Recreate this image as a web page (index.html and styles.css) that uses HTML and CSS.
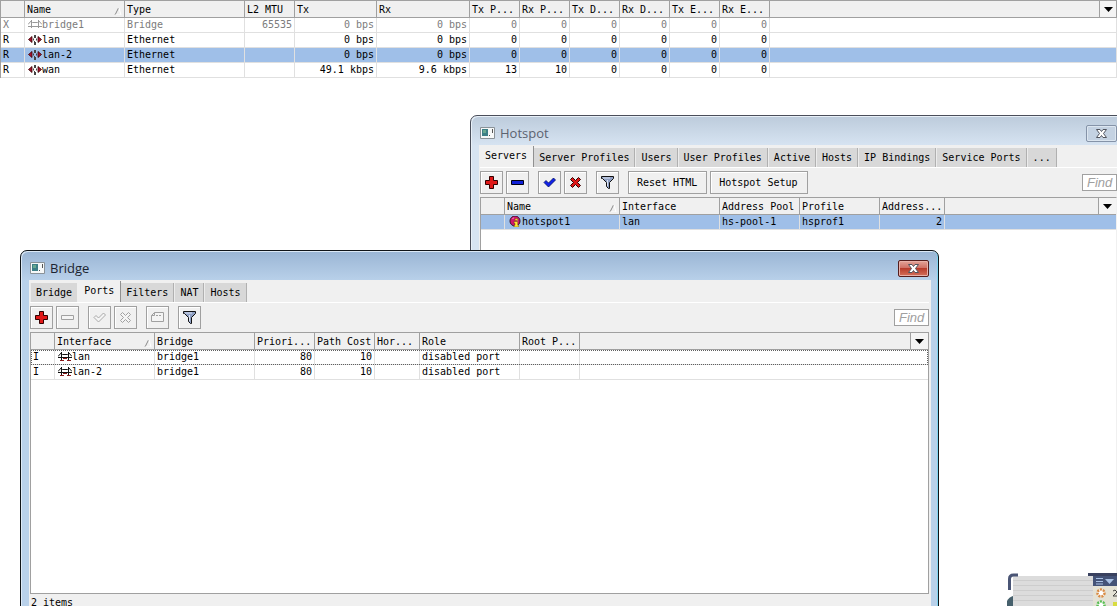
FILE: index.html
```html
<!DOCTYPE html>
<html lang="en">
<head>
<meta charset="utf-8">
<title>Interfaces</title>
<link rel="stylesheet" href="styles.css">
</head>
<body>
<svg class="defs" aria-hidden="true">
  <symbol id="plus" viewBox="0 0 13 13"><path d="M4.500 .5h4v4h4v4h-4v4h-4v-4h-4v-4h4z" fill="#e01818" stroke="#300"/></symbol>
  <symbol id="minus" viewBox="0 0 13 13"><path d="M.5 4.500h12v4h-12z" fill="#1020d8" stroke="#001"/></symbol>
  <symbol id="minus-off" viewBox="0 0 13 13"><path d="M.5 4.500h12v4h-12z" fill="#f4f4f4" stroke="#a0a0a0"/></symbol>
  <symbol id="check" viewBox="0 0 13 13"><path d="M1 6.500l2-2 2.500 2.500 5-5 2 2-7 7z" fill="#1020e8" stroke="#001060" stroke-width=".8"/></symbol>
  <symbol id="check-off" viewBox="0 0 13 13"><path d="M1 6.500l2-2 2.500 2.500 5-5 2 2-7 7z" fill="#f4f4f4" stroke="#a0a0a0" stroke-width=".9"/></symbol>
  <symbol id="cross" viewBox="0 0 13 13"><path d="M1.500 3.500l2-2 3 3 3-3 2 2-3 3 3 3-2 2-3-3-3 3-2-2 3-3z" fill="#e01818" stroke="#300"/></symbol>
  <symbol id="cross-off" viewBox="0 0 13 13"><path d="M1.500 3.500l2-2 3 3 3-3 2 2-3 3 3 3-2 2-3-3-3 3-2-2 3-3z" fill="#f4f4f4" stroke="#a0a0a0"/></symbol>
  <symbol id="note-off" viewBox="0 0 13 13"><path d="M3.500 1.500h9v9h-12v-6zM.5 4.500h3v-3M5 4.500h2M8 4.500h2" fill="#f4f4f4" stroke="#a0a0a0"/></symbol>
  <symbol id="funnel" viewBox="0 0 13 13"><path d="M.5 .5h12v2l-4 4v6h-1l-2-2v-4l-4-4h-1z" fill="#8fa0c4" stroke="#111"/><path d="M2 2h7M6.500 4v6" stroke="#dce4f4"/></symbol>
  <symbol id="ether" viewBox="0 0 14 11"><path d="M.5 5.500L4 2.500v6zM13.500 5.500L10 2.500v6z" fill="#b01030" stroke="#300" stroke-width=".8"/><path d="M5.500 4.500v2M6.500 1v3M6.500 7v4M8.500 4.500v2M7.500 1v3M7.500 8v3" stroke="#444" fill="none"/></symbol>
  <symbol id="bridge" viewBox="0 0 14 11"><path d="M0 5.500L3.500 1.500M3.500 1v8M10.500 1v8M3.500 2.500l1 1h5l1-1M0 6.500h14M10.500 1.500l3.500 4" stroke="#111" fill="none"/><path d="M2 9.500h4M9 9.500h4M5 7.500h4" stroke="#8a1818"/></symbol>
  <symbol id="bridge-off" viewBox="0 0 14 11"><path d="M0 5.500L3.500 1.500M3.500 1v8M10.500 1v8M3.500 2.500l1 1h5l1-1M0 7.500h14M10.500 1.500l3.500 4" stroke="#999" fill="none"/></symbol>
  <symbol id="sort" viewBox="0 0 8 8"><path d="M1 8L4.500 1" stroke="#888"/><path d="M5 1l2 7H1" stroke="#fff" fill="none"/></symbol>
  <symbol id="down" viewBox="0 0 9 5"><path d="M0 0h9L4.500 5z" fill="#000"/></symbol>
  <symbol id="app" viewBox="0 0 15 12"><path d="M.5 .5h14v11H.5z" fill="#f6f8f8" stroke="#8a9298"/><path d="M2 2h6v7H2z" fill="#3d7f86"/><path d="M3 3h3v3H3z" fill="#68a890"/><path d="M9 8h1v1H9zM12 2h1v4h-1z" fill="#555"/></symbol>
  <symbol id="close" viewBox="0 0 13 11"><path d="M1.500 1.500h3.500l1.500 2 1.500-2h3.500L8.500 5.500l3 4H8l-1.500-2-1.500 2H1.500l3-4z" fill="#fff" stroke="#50545e"/></symbol>
</svg>

<main class="desktop">
  <section class="list interfaces">
    <table class="grid">
      <colgroup><col class="w24"><col class="w100"><col class="w120"><col class="w50"><col class="w82"><col class="w93"><col class="w50"><col class="w50"><col class="w50"><col class="w50"><col class="w50"><col class="w50"><col><col class="w17"></colgroup>
      <thead><tr><th></th><th>Name<svg class="sort"><use href="#sort"/></svg></th><th>Type</th><th>L2 MTU</th><th>Tx</th><th>Rx</th><th>Tx P...</th><th>Rx P...</th><th>Tx D...</th><th>Rx D...</th><th>Tx E...</th><th>Rx E...</th><th></th><th><button class="pick" aria-label="Columns"><svg><use href="#down"/></svg></button></th></tr></thead>
      <tbody>
        <tr class="off"><td>X</td><td class="named"><svg><use href="#bridge-off"/></svg>bridge1</td><td>Bridge</td><td class="num">65535</td><td class="num">0 bps</td><td class="num">0 bps</td><td class="num">0</td><td class="num">0</td><td class="num">0</td><td class="num">0</td><td class="num">0</td><td class="num">0</td><td colspan="2"></td></tr>
        <tr><td>R</td><td class="named"><svg><use href="#ether"/></svg>lan</td><td>Ethernet</td><td></td><td class="num">0 bps</td><td class="num">0 bps</td><td class="num">0</td><td class="num">0</td><td class="num">0</td><td class="num">0</td><td class="num">0</td><td class="num">0</td><td colspan="2"></td></tr>
        <tr class="selected"><td>R</td><td class="named"><svg><use href="#ether"/></svg>lan-2</td><td>Ethernet</td><td></td><td class="num">0 bps</td><td class="num">0 bps</td><td class="num">0</td><td class="num">0</td><td class="num">0</td><td class="num">0</td><td class="num">0</td><td class="num">0</td><td colspan="2"></td></tr>
        <tr><td>R</td><td class="named"><svg><use href="#ether"/></svg>wan</td><td>Ethernet</td><td></td><td class="num">49.1 kbps</td><td class="num">9.6 kbps</td><td class="num">13</td><td class="num">10</td><td class="num">0</td><td class="num">0</td><td class="num">0</td><td class="num">0</td><td colspan="2"></td></tr>
      </tbody>
    </table>
  </section>

  <section class="window hotspot">
    <header class="titlebar"><svg class="app"><use href="#app"/></svg><h2>Hotspot</h2><button class="close" aria-label="Close"><svg><use href="#close"/></svg></button></header>
    <div class="client">
      <nav class="tabs"><button class="tab active">Servers</button><button class="tab">Server Profiles</button><button class="tab">Users</button><button class="tab">User Profiles</button><button class="tab">Active</button><button class="tab">Hosts</button><button class="tab">IP Bindings</button><button class="tab">Service Ports</button><button class="tab">...</button></nav>
      <div class="toolbar">
        <div class="group"><button class="tool" aria-label="Add"><svg><use href="#plus"/></svg></button><button class="tool" aria-label="Remove"><svg><use href="#minus"/></svg></button></div>
        <div class="group"><button class="tool" aria-label="Enable"><svg><use href="#check"/></svg></button><button class="tool" aria-label="Disable"><svg><use href="#cross"/></svg></button></div>
        <div class="group"><button class="tool" aria-label="Filter"><svg><use href="#funnel"/></svg></button></div>
        <div class="group"><button class="tool text">Reset HTML</button><button class="tool text">Hotspot Setup</button></div>
        <input class="find" type="text" placeholder="Find" aria-label="Find">
      </div>
      <div class="list">
        <table class="grid">
          <colgroup><col class="w24"><col class="w115"><col class="w100"><col class="w80"><col class="w80"><col class="w65"><col><col class="w17"></colgroup>
          <thead><tr><th></th><th>Name<svg class="sort"><use href="#sort"/></svg></th><th>Interface</th><th>Address Pool</th><th>Profile</th><th>Address...</th><th></th><th><button class="pick" aria-label="Columns"><svg><use href="#down"/></svg></button></th></tr></thead>
          <tbody><tr class="selected"><td></td><td class="named"><svg viewBox="0 0 14 12"><circle cx="7" cy="5.500" r="5.500" fill="#d0186c" stroke="#301020"/><path d="M4 3l2-1M9 3l1 3" stroke="#ff90c0"/><path d="M6 6h4v4h1v2H6v-2h1V8H6zM7 3h3v2H7z" fill="#ffe630" stroke="#403000" stroke-width=".4"/></svg>hotspot1</td><td>lan</td><td>hs-pool-1</td><td>hsprof1</td><td class="num">2</td><td colspan="2"></td></tr></tbody>
        </table>
      </div>
    </div>
  </section>

  <section class="window bridge">
    <header class="titlebar"><svg class="app"><use href="#app"/></svg><h2>Bridge</h2><button class="close" aria-label="Close"><svg><use href="#close"/></svg></button></header>
    <div class="client">
      <nav class="tabs"><button class="tab">Bridge</button><button class="tab active">Ports</button><button class="tab">Filters</button><button class="tab">NAT</button><button class="tab">Hosts</button></nav>
      <div class="toolbar">
        <div class="group"><button class="tool" aria-label="Add"><svg><use href="#plus"/></svg></button><button class="tool" disabled aria-label="Remove"><svg><use href="#minus-off"/></svg></button></div>
        <div class="group"><button class="tool" disabled aria-label="Enable"><svg><use href="#check-off"/></svg></button><button class="tool" disabled aria-label="Disable"><svg><use href="#cross-off"/></svg></button></div>
        <div class="group"><button class="tool" disabled aria-label="Comment"><svg><use href="#note-off"/></svg></button></div>
        <div class="group"><button class="tool" aria-label="Filter"><svg><use href="#funnel"/></svg></button></div>
        <input class="find" type="text" placeholder="Find" aria-label="Find">
      </div>
      <div class="list">
        <table class="grid">
          <colgroup><col class="w24"><col class="w100"><col class="w100"><col class="w60"><col class="w60"><col class="w45"><col class="w100"><col class="w60"><col><col class="w17"></colgroup>
          <thead><tr><th></th><th>Interface<svg class="sort"><use href="#sort"/></svg></th><th>Bridge</th><th>Priori...</th><th>Path Cost</th><th>Hor...</th><th>Role</th><th>Root P...</th><th></th><th><button class="pick" aria-label="Columns"><svg><use href="#down"/></svg></button></th></tr></thead>
          <tbody>
            <tr class="focused"><td>I</td><td class="named"><svg><use href="#bridge"/></svg>lan</td><td>bridge1</td><td class="num">80</td><td class="num">10</td><td></td><td>disabled port</td><td></td><td colspan="2"></td></tr>
            <tr><td>I</td><td class="named"><svg><use href="#bridge"/></svg>lan-2</td><td>bridge1</td><td class="num">80</td><td class="num">10</td><td></td><td>disabled port</td><td></td><td colspan="2"></td></tr>
          </tbody>
        </table>
      </div>
      <footer class="status">2 items</footer>
    </div>
  </section>

  <svg class="gadget" viewBox="0 0 110 34" aria-hidden="true">
    <path d="M6 4h80v30H6z" fill="#dcdcdc"/>
    <path d="M6 8.500h80M6 13.500h80M6 18.500h80M6 23.500h80M6 28.500h80" stroke="#cdcdcd"/>
    <path d="M2.500 18V7q0-4 4-4H11" fill="none" stroke="#4a5575" stroke-width="3"/>
    <path d="M0 34v-5q2-4 6-5v10z" fill="#46606c"/>
    <path d="M81 1h29v3H81z" fill="#39415f"/><path d="M86 4h24v10H86z" fill="#445378"/>
    <path d="M89 6.500h7M89 9.500h7M89 12h7" stroke="#a9c1e4"/><path d="M98 7h9l-4.500 5z" fill="#a9c1e4"/>
    <path d="M86 14h24v20H86z" fill="#e4e2d6"/>
    <circle cx="94" cy="21" r="3.500" fill="#fff" stroke="#d98c45" stroke-width="2.500" stroke-dasharray="2 1"/>
    <circle cx="94" cy="33" r="3.500" fill="#fff" stroke="#5abf54" stroke-width="2.500" stroke-dasharray="2 1"/>
    <path d="M106 19l2-1 2 2-4 4h4" fill="none" stroke="#444"/><path d="M106 30h4v4h-4z" fill="#d8dc40"/>
  </svg>
</main>
</body>
</html>
```
FILE: styles.css
```css
* { box-sizing: border-box; }
body {
  margin: 0;
  background: #fff;
  color: #000;
  font: 10px/14px "DejaVu Sans Mono", "Liberation Mono", monospace;
}
button, input { margin: 0; padding: 0; border: 0; font: inherit; color: inherit; }
.defs { display: none; }
.desktop { position: relative; height: 100vh; overflow: hidden; }

/* Lists */
.list { border-top: 1px solid #a0a0a0; border-left: 1px solid #a0a0a0; background: #fff; }
.grid { width: 100%; table-layout: fixed; border-collapse: separate; border-spacing: 0; }
.grid th, .grid td { padding: 0 2px; white-space: nowrap; overflow: hidden; text-align: left; font-weight: normal; }
.grid th { height: 17px; padding-top: 1px; background: #f0f0f0; border-right: 1px solid #a0a0a0; border-bottom: 1px solid #a0a0a0; }
.grid td { height: 15px; border-right: 1px solid #e0e0e0; border-bottom: 1px solid #e0e0e0; }
.grid th:last-child { padding: 0; }
.grid td.num { text-align: right; }
.grid td.named { padding-left: 3px; }
.named svg { width: 14px; height: 11px; vertical-align: -2px; }
.off { color: #7c7c7c; }
.selected { background: #9fbfe8; }
.focused { outline: 1px dotted #606060; outline-offset: -1px; }
.sort { float: right; width: 8px; height: 8px; margin-top: 4px; }
.pick { display: flex; width: 100%; height: 16px; align-items: center; justify-content: center; background: #f4f4f4; }
.pick svg { width: 9px; height: 5px; }
.w17 { width: 17px; }
.w24 { width: 24px; }
.w45 { width: 45px; }
.w50 { width: 50px; }
.w60 { width: 60px; }
.w65 { width: 65px; }
.w80 { width: 80px; }
.w82 { width: 82px; }
.w93 { width: 93px; }
.w100 { width: 100px; }
.w115 { width: 115px; }
.w120 { width: 120px; }

/* Windows */
.window {
  position: absolute;
  display: flex;
  flex-direction: column;
  padding: 0 7px 0 8px;
  border: 1px solid #101418;
  border-radius: 7px 7px 0 0;
}
.hotspot {
  top: 115px; left: 470px; right: -8px; bottom: -20px;
  border-color: #4a4e5a;
  background: linear-gradient(#bccbdb, #d7e4f2 30px);
  box-shadow: inset 1px 1px #e8f0f8;
}
.bridge {
  top: 250px; left: 20px; right: 178px; bottom: -8px;
  background: linear-gradient(#9ab5d4, #b9d1ea 30px);
  box-shadow: inset 1px 1px #dce9f6, inset -1px 0 #7fd4f0;
}
.titlebar { display: flex; align-items: center; height: 29px; padding: 6px 2px 0 1px; gap: 5px; }
.titlebar h2 { flex: 1; margin: 0; padding-bottom: 2px; font: 13px/18px "Open Sans", "Noto Sans", sans-serif; color: #1c2430; }
.hotspot h2 { color: #5c6370; }
.app { width: 15px; height: 12px; margin-bottom: 2px; }
.close {
  display: flex; align-items: center; justify-content: center;
  width: 31px; height: 17px;
  border: 1px solid #541d1c;
  border-radius: 2px;
  background: linear-gradient(#e3a499, #d07166 45%, #b83c2c 50%, #d4705a);
  box-shadow: inset 0 0 0 1px #e8b0a8;
}
.hotspot .titlebar { padding-right: 0; }
.hotspot .close { border-color: #8593a8; background: #c4d2e2; box-shadow: inset 0 0 0 1px #dce6f0; }
.close svg { width: 13px; height: 11px; }
.client { flex: 1; display: flex; flex-direction: column; padding: 1px 2px 0 1px; background: #f0f0f0; }
.hotspot .client { padding-right: 0; }
.client .list { flex: 1; border-right: 1px solid #a0a0a0; }
.hotspot .list { border-right-color: #f0f0f0; }
.client .grid th:last-child, .client .grid td:last-child { border-right: 0; }

.tabs { display: flex; align-items: flex-end; height: 21px; }
.tab {
  height: 19px;
  padding: 0 5px;
  background: #d8d8d8;
  border-left: 1px solid #ececec;
  border-right: 1px solid #b0b0b0;
  white-space: nowrap;
}
.tab.active {
  z-index: 1;
  height: 21px;
  margin: 0 -1px;
  padding: 0 6px 2px;
  background: #f0f0f0;
  border-left-color: #f0f0f0;
  border-right-color: #909090;
}
.tab.active:first-child { margin-left: 0; padding-left: 4px; }
.toolbar { display: flex; align-items: center; gap: 9px; height: 30px; border-top: 1px solid #fff; }
.group { display: flex; gap: 3px; }
.tool {
  display: flex; align-items: center; justify-content: center;
  width: 23px; height: 23px;
  border: 1px solid #a0a0a0;
  background: #f0f0f0;
  box-shadow: inset 1px 1px #fff;
}
.tool.text { width: auto; padding: 0 9px 0 8px; }
.tool svg { width: 13px; height: 13px; }
.find {
  width: 35px; height: 17px;
  margin-left: auto;
  padding-left: 4px;
  border: 1px solid #a0a0a0;
  background: #fff;
  font: italic 13px/15px "Liberation Sans", Arial, sans-serif;
}
.find::placeholder { color: #a0a0a0; opacity: 1; }
.status { height: 20px; padding: 2px 1px; border-top: 1px solid #a0a0a0; }

.gadget { position: absolute; right: 0; bottom: 0; width: 110px; height: 34px; }
```
